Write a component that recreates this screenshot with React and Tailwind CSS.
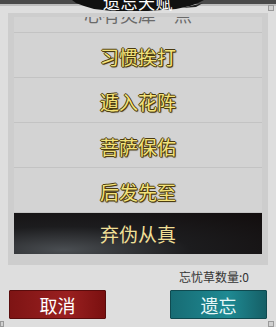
import React from "react";

const talents = ["习惯挨打", "遁入花阵", "菩萨保佑", "后发先至"];

const outline =
  "[text-shadow:1px_0_0_#4a3a10,-1px_0_0_#4a3a10,0_1px_0_#4a3a10,0_-1px_0_#4a3a10,1px_1px_1px_#2a2000]";

const TalentRow = ({ name }) => (
  <div className="h-[45px] shrink-0 flex items-center justify-center pt-[2px] bg-[#d3d3d3] border-b border-[#c3c3c3]">
    <span className={`text-[19px] leading-none text-[#f3e27a] ${outline}`}>{name}</span>
  </div>
);

const App = () => {
  return (
    <div
      className="relative w-[276px] h-[327px] overflow-hidden bg-[#dedede] flex flex-col"
      style={{ fontFamily: '"Noto Sans CJK SC", "Noto Sans", sans-serif' }}
    >
      {/* top frame */}
      <div className="h-[4px] shrink-0 bg-[#4a4a4a]" />
      <div className="h-[2px] shrink-0 bg-[#bdbdbd]" />

      {/* list */}
      <div className="mx-[8px] mt-[7px] h-[252px] shrink-0 bg-[#cdcdcd] pt-[4px] px-[6px] flex flex-col">
        <div className="flex-1 overflow-hidden flex flex-col">
          <div className="-mt-[29px] h-[45px] shrink-0 flex items-end justify-center pb-[9px] bg-[#d3d3d3] border-b border-[#c3c3c3]">
            <span className="text-[18px] leading-none text-[#6a6a6a]">心有灵犀一点</span>
          </div>
          {talents.map((t) => (
            <TalentRow key={t} name={t} />
          ))}
          <div className="h-[41px] shrink-0 flex items-center justify-center bg-[radial-gradient(ellipse_at_20%_90%,#4a4e52_0%,#1c1c1e_45%,#120d0d_100%)]">
            <span className="text-[19px] leading-none text-[#efdf96]">弃伪从真</span>
          </div>
        </div>
      </div>

      {/* count */}
      <div className="mt-[4px] pr-[27px] text-right text-[12px] leading-[16px] text-[#333]">
        忘忧草数量:0
      </div>

      {/* buttons */}
      <div className="mt-[5px] px-[9px] flex justify-between">
        <button className="w-[97px] h-[29px] flex items-center justify-center text-[18px] leading-none text-white bg-[linear-gradient(90deg,#7e1414,#9a2020_60%,#7a1010)] border border-[#5a0c0c] rounded-[1px]">
          取消
        </button>
        <button className="w-[97px] h-[29px] flex items-center justify-center text-[18px] leading-none text-[#e8f8f8] bg-[linear-gradient(90deg,#176c74,#1f8a93_60%,#155f66)] border border-[#0f4a50] rounded-[1px]">
          遗忘
        </button>
      </div>

      {/* corner marks */}
      <div className="absolute right-[2px] top-[5px] w-[6px] h-[6px] border border-[#9a9a9a] bg-[#d0d0d0]" />
      <div className="absolute left-[0px] bottom-[0px] w-[4px] h-[6px] border border-[#9a9a9a] bg-[#d0d0d0]" />
      <div className="absolute right-[2px] bottom-[0px] w-[6px] h-[6px] border border-[#9a9a9a] bg-[#d0d0d0]" />

      {/* title banner */}
      <div className="absolute z-10 left-[72px] top-0 w-[132px] h-[12px] overflow-hidden flex justify-center">
        <svg className="absolute inset-0" width="132" height="12" viewBox="0 0 132 12">
          <path
            d="M0 0 L132 0 L126 3 L118 6 L104 9 L76 11 L40 11 L22 9 L12 6 L4 3 Z"
            fill="#111"
          />
          <path d="M110 8 L131 3 L124 7 Z" fill="#222" />
        </svg>
        <span className="relative text-[17px] leading-none mt-[-7px] text-white tracking-[0.5px]">
          遗忘天赋
        </span>
      </div>
    </div>
  );
};

export default App;
